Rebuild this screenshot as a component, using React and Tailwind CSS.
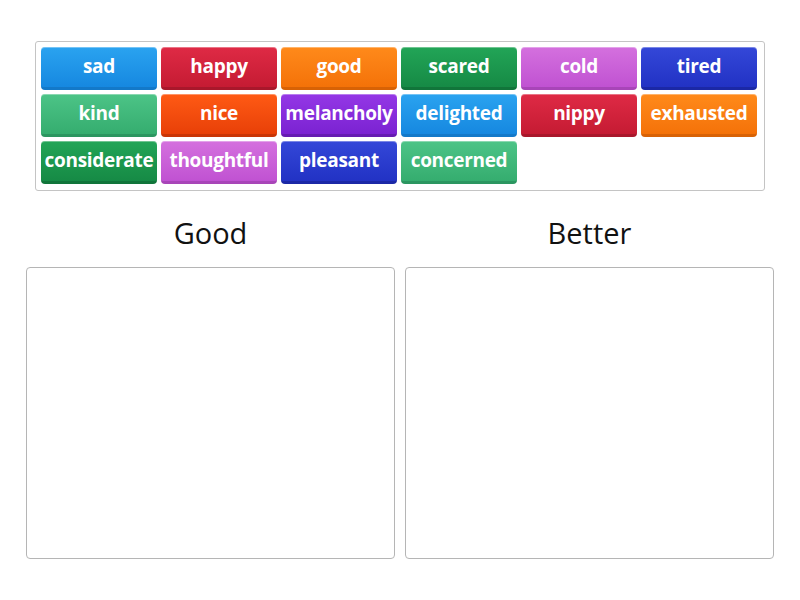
import React from 'react'

const tiles = [
  { word: 'sad', cls: 'from-[#2aa3f0] to-[#1688e0] border-[#1379c9]' },
  { word: 'happy', cls: 'from-[#df2a45] to-[#c51b33] border-[#a9172b]' },
  { word: 'good', cls: 'from-[#ff8a1a] to-[#f47208] border-[#d86205]' },
  { word: 'scared', cls: 'from-[#22a557] to-[#168a45] border-[#11753a]' },
  { word: 'cold', cls: 'from-[#d470de] to-[#c052d2] border-[#a845b8]' },
  { word: 'tired', cls: 'from-[#3447d8] to-[#2232c4] border-[#1b28a6]' },
  { word: 'kind', cls: 'from-[#4cc487] to-[#35ad6f] border-[#2b9660]' },
  { word: 'nice', cls: 'from-[#ff5a14] to-[#e84008] border-[#c93506]' },
  { word: 'melancholy', cls: 'from-[#9437e6] to-[#7b22d2] border-[#661bb2]' },
  { word: 'delighted', cls: 'from-[#2aa3f0] to-[#1688e0] border-[#1379c9]' },
  { word: 'nippy', cls: 'from-[#df2a45] to-[#c51b33] border-[#a9172b]' },
  { word: 'exhausted', cls: 'from-[#ff8a1a] to-[#f47208] border-[#d86205]' },
  { word: 'considerate', cls: 'from-[#22a557] to-[#168a45] border-[#11753a]' },
  { word: 'thoughtful', cls: 'from-[#d470de] to-[#c052d2] border-[#a845b8]' },
  { word: 'pleasant', cls: 'from-[#3447d8] to-[#2232c4] border-[#1b28a6]' },
  { word: 'concerned', cls: 'from-[#4cc487] to-[#35ad6f] border-[#2b9660]' },
]

const Tile = ({ word, cls }) => (
  <div
    className={`h-[43px] rounded-[4px] bg-gradient-to-b border-b-[3px] shadow-[inset_0_1px_0_rgba(255,255,255,0.35)] flex items-center justify-center pb-[1px] text-white font-bold text-[19px] leading-none whitespace-nowrap tracking-[-0.3px] ${cls}`}
  >
    {word}
  </div>
)

const Bucket = ({ title }) => (
  <div className="flex flex-col">
    <div className="h-[58px] flex items-center justify-center pb-[11px] text-[29px] text-[#111] leading-none">
      {title}
    </div>
    <div className="h-[292px] border border-[#b5b5b5] rounded-[4px] bg-white" />
  </div>
)

export default function App() {
  return (
    <div
      className="w-[800px] h-[600px] bg-white"
      style={{ fontFamily: '"Open Sans", "Noto Sans", sans-serif' }}
    >
      <div className="pt-[41px] pl-[35px]">
        <div className="w-[730px] h-[150px] border border-[#c4c4c4] rounded-[3px] pt-[5px] pl-[5px] pr-[7px]">
          <div className="grid grid-cols-[repeat(6,116px)] gap-x-[4px] gap-y-[4px]">
            {tiles.map((t) => (
              <Tile key={t.word} {...t} />
            ))}
          </div>
        </div>
      </div>
      <div className="pl-[26px] pt-[18px] grid grid-cols-[369px_369px] gap-x-[10px]">
        <Bucket title="Good" />
        <Bucket title="Better" />
      </div>
    </div>
  )
}
